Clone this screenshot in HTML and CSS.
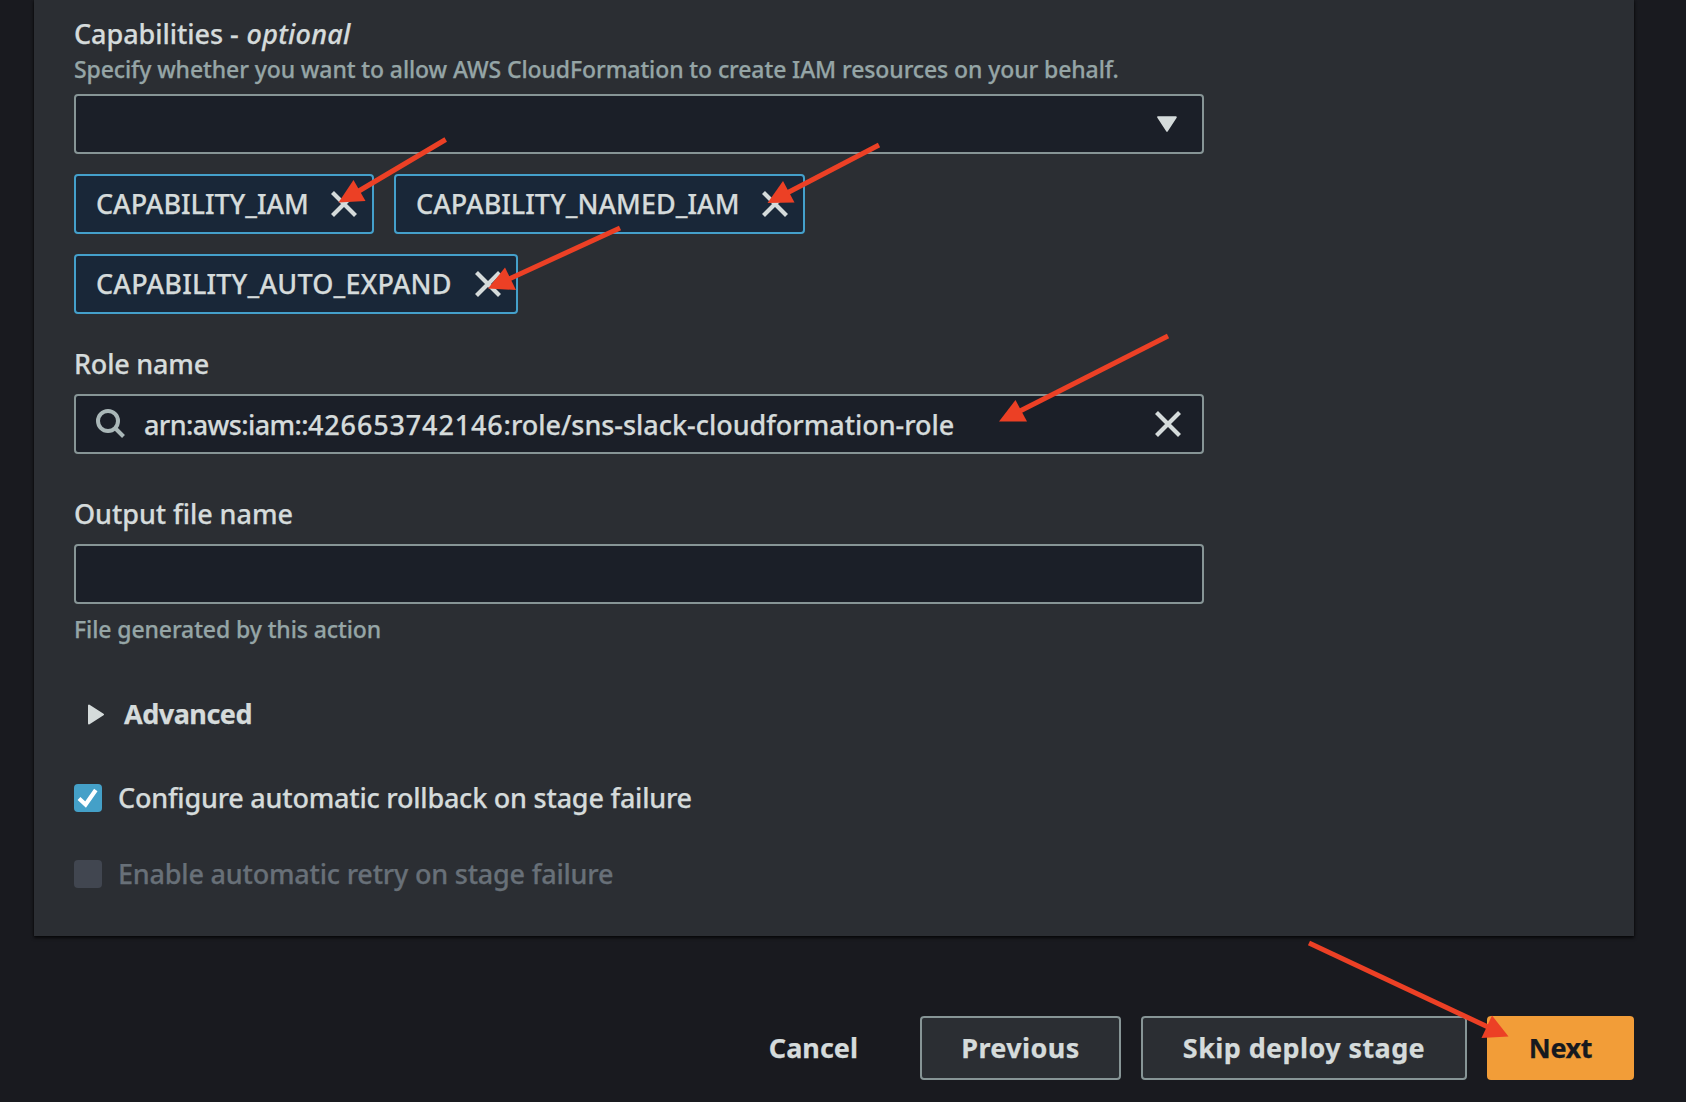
FILE: index.html
```html
<!DOCTYPE html>
<html lang="en">
<head>
<meta charset="utf-8">
<title>Add deploy stage</title>
<link rel="stylesheet" href="styles.css">
</head>
<body>
<main class="card">
  <div class="form">
    <label class="label cap-label">Capabilities - <em>optional</em></label>
    <p class="hint hint-top">Specify whether you want to allow AWS CloudFormation to create IAM resources on your behalf.</p>
    <div class="field select">
      <svg class="caret" width="20" height="16" viewBox="0 0 20 16"><path d="M1.200 1.200h17.600L10 14.800z"/></svg>
    </div>
    <div class="tags">
      <div class="tag tag-iam"><span>CAPABILITY_IAM</span><svg class="close" width="26" height="26" viewBox="0 0 26 26"><path d="M1.500 1.500l23 23M24.500 1.500l-23 23"/></svg></div>
      <div class="tag tag-named"><span>CAPABILITY_NAMED_IAM</span><svg class="close" width="26" height="26" viewBox="0 0 26 26"><path d="M1.500 1.500l23 23M24.500 1.500l-23 23"/></svg></div>
      <div class="tag tag-expand"><span>CAPABILITY_AUTO_EXPAND</span><svg class="close" width="26" height="26" viewBox="0 0 26 26"><path d="M1.500 1.500l23 23M24.500 1.500l-23 23"/></svg></div>
    </div>
    <label class="label role-label">Role name</label>
    <div class="field search">
      <svg class="glass" width="30" height="30" viewBox="0 0 30 30"><circle cx="12" cy="12" r="10"/><path d="M19 19l8.500 8.500"/></svg>
      <span class="value"><span class="service">arn:aws:iam::</span><span class="account">426653742146</span>:role/sns-slack-cloudformation-role</span>
      <svg class="close" width="26" height="26" viewBox="0 0 26 26"><path d="M1.500 1.500l23 23M24.500 1.500l-23 23"/></svg>
    </div>
    <label class="label output-label">Output file name</label>
    <div class="field"></div>
    <p class="hint hint-bottom">File generated by this action</p>
  </div>
  <div class="advanced">
    <svg class="arrow" width="16" height="21" viewBox="0 0 16 21"><path d="M1 1.500v18L15 10.500z"/></svg>
    <span>Advanced</span>
  </div>
  <div class="check check-rollback">
    <span class="box box-on"><svg class="tick" width="28" height="28" viewBox="0 0 28 28"><path d="M5 14.500l6.600 6L21.800 6"/></svg></span>
    <span>Configure automatic rollback on stage failure</span>
  </div>
  <div class="check check-retry">
    <span class="box"></span>
    <span>Enable automatic retry on stage failure</span>
  </div>
</main>
<footer class="actions">
  <a class="btn link">Cancel</a>
  <a class="btn previous">Previous</a>
  <a class="btn skip">Skip deploy stage</a>
  <a class="btn primary">Next</a>
</footer>
<svg class="annotations" width="1686" height="1102" viewBox="0 0 1686 1102">
  <g class="shafts">
    <path d="M445.700 139.500L358 191.500"/>
    <path d="M879 145L787 193"/>
    <path d="M620 228L509 279"/>
    <path d="M1168 336L1020 411"/>
    <path d="M1309 943L1488 1027"/>
  </g>
  <g class="heads">
    <path d="M338.500 202.500L353.500 180L365.500 201z"/>
    <path d="M767.500 203L783 181L794.500 202.500z"/>
    <path d="M488 288.500L505 267.500L516 290z"/>
    <path d="M999 421.500L1015.500 400L1027 421.500z"/>
    <path d="M1508.500 1036.500L1492 1015.500L1481.500 1038z"/>
  </g>
</svg>
</body>
</html>
```
FILE: styles.css
```css
* { box-sizing: border-box; }

body {
  margin: 0;
  height: 1102px;
  position: relative;
  overflow: hidden;
  background: #191a1f;
  color: #d5dbdb;
  font: 500 27px/36px "Noto Sans", sans-serif;
  white-space: nowrap;
  -webkit-text-stroke: .25px currentColor;
}

.card {
  width: 1600px;
  height: 936px;
  margin-left: 34px;
  padding: 16px 40px 0;
  background: #2b2e33;
  box-shadow: 0 2px 3px rgba(0, 0, 0, .65), 0 0 2px rgba(0, 0, 0, .6);
}

.form { width: 1130px; }
.label { display: block; letter-spacing: -.2px; }
.cap-label { letter-spacing: -.05px; }
.cap-label em { margin-left: 1px; letter-spacing: .25px; }
.role-label { margin: 32px 0 12px; }
.output-label { margin: 42px 0 12px; letter-spacing: -.05px; }

.hint {
  margin: 0;
  color: #95a5a6;
  font-size: 23px;
  line-height: 34px;
  letter-spacing: -.1px;
}
.hint-top { margin-bottom: 8px; }
.hint-bottom { margin-top: 8px; }

.field {
  display: flex;
  align-items: center;
  height: 60px;
  border: 2px solid #879596;
  border-radius: 4px;
  background: #1b1f28;
}
.select { justify-content: flex-end; padding-right: 25px; }
.search { padding: 0 21px 0 20px; }
.value { flex: 1; margin-left: 18px; padding-top: 2px; letter-spacing: -.03px; }
.service { letter-spacing: -.6px; }
.account { letter-spacing: .85px; }

.caret { fill: #d5dbdb; stroke: #d5dbdb; stroke-width: 2; stroke-linejoin: round; }
.close { fill: none; stroke: #d5dbdb; stroke-width: 4.2; }
.glass { fill: none; stroke: #aab7b8; stroke-width: 4; }

.tags { display: flex; flex-wrap: wrap; gap: 20px; margin-top: 20px; }
.tag {
  display: flex;
  align-items: center;
  justify-content: space-between;
  height: 60px;
  padding: 0 15px 0 20px;
  border: 2px solid #44a0cb;
  border-radius: 4px;
  background: #192738;
}
.tag-iam { width: 300px; letter-spacing: -.05px; }
.tag-named { width: 411px; }
.tag-expand { width: 444px; letter-spacing: .18px; }

.advanced {
  display: flex;
  align-items: center;
  gap: 20px;
  margin: 50px 0 0 14px;
  font-weight: 700;
  letter-spacing: -.5px;
}
.arrow { fill: #d5dbdb; stroke: #d5dbdb; stroke-width: 2; stroke-linejoin: round; }

.check { display: flex; align-items: center; gap: 16px; letter-spacing: -.22px; }
.check-rollback { margin-top: 48px; }
.check-retry { margin-top: 40px; color: #687078; letter-spacing: -.2px; }
.box { width: 28px; height: 28px; border-radius: 4px; background: #414650; }
.box-on { background: #44a0c8; }
.tick { display: block; fill: none; stroke: #fff; stroke-width: 4.200; }

.actions {
  display: flex;
  justify-content: flex-end;
  gap: 20px;
  margin: 80px 52px 0 0;
}
.btn {
  display: flex;
  align-items: center;
  justify-content: center;
  height: 64px;
  border: 2px solid #879596;
  border-radius: 4px;
  background: #2b2e33;
  font-weight: 700;
  letter-spacing: .4px;
}
.link { padding: 0 40px; border-color: transparent; background: none; letter-spacing: 0; }
.previous { width: 201px; }
.skip { width: 326px; }
.primary { width: 147px; border-color: #f29d38; background: #f29d38; color: #16191f; letter-spacing: -.4px; }

.annotations { position: absolute; top: 0; left: 0; }
.shafts { fill: none; stroke: #ec4025; stroke-width: 5; }
.heads { fill: #ec4025; }
```
